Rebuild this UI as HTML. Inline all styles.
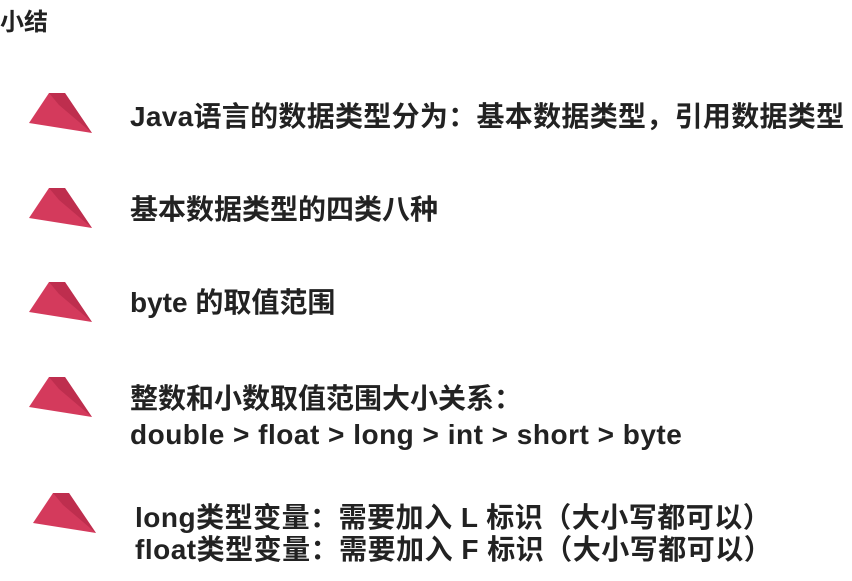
<!DOCTYPE html><html><head><meta charset="utf-8"><style>
body{margin:0;width:852px;height:581px;background:#fff;position:relative;overflow:hidden;font-family:"Liberation Sans","Noto Sans CJK SC",sans-serif;font-weight:bold;color:#222}
.t{position:absolute;font-size:28px;white-space:nowrap;line-height:34px}
svg{position:absolute}
</style></head><body>
<div class="t" style="left:0;top:6px;font-size:24px">小结</div>
<svg width="852" height="581" style="left:0;top:0">
<defs><g id="tri"><polygon points="0,30 20,0 36,0 63,40" fill="#d43a5c"/><polygon points="20,0 36,0 63,40 30,12" fill="#b52a48" opacity=".7"/></g></defs>
<use href="#tri" x="29" y="93"/>
<use href="#tri" x="29" y="188"/>
<use href="#tri" x="29" y="282"/>
<use href="#tri" x="29" y="377"/>
<use href="#tri" x="33" y="493"/>
</svg>
<div class="t" style="left:130px;top:100px;letter-spacing:0.3px">Java语言的数据类型分为：基本数据类型，引用数据类型</div>
<div class="t" style="left:130px;top:193px">基本数据类型的四类八种</div>
<div class="t" style="left:130px;top:286px">byte 的取值范围</div>
<div class="t" style="left:130px;top:382px">整数和小数取值范围大小关系：</div>
<div class="t" style="left:130px;top:418px;letter-spacing:0.5px">double &gt; float &gt; long &gt; int &gt; short &gt; byte</div>
<div class="t" style="left:135px;top:501px;letter-spacing:0.5px">long类型变量：需要加入 L 标识（大小写都可以）</div>
<div class="t" style="left:135px;top:533px;letter-spacing:0.5px">float类型变量：需要加入 F 标识（大小写都可以）</div>
</body></html>
